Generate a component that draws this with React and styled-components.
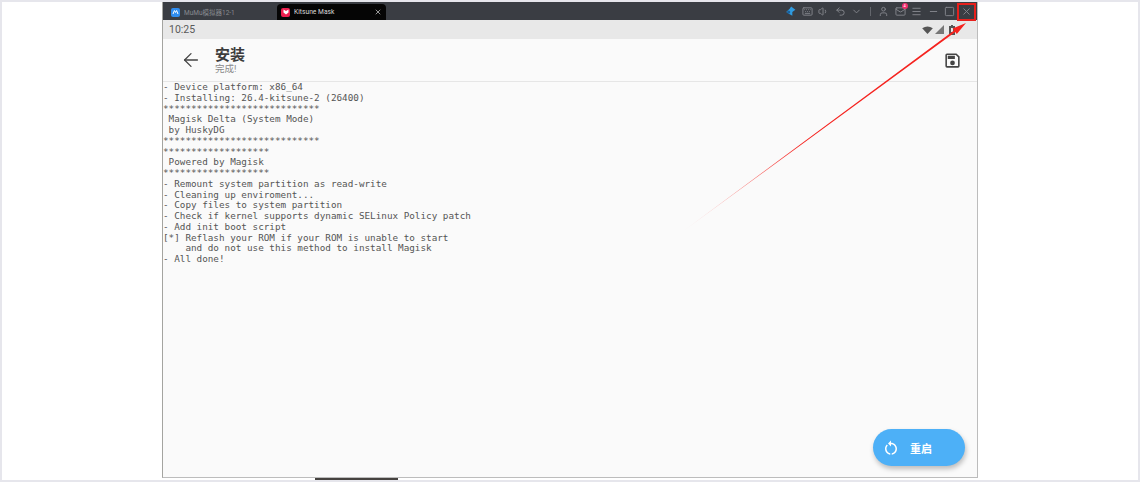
import React from "react";
import styled, { createGlobalStyle } from "styled-components";
import { ArrowLeft, Volume1, Undo2, ChevronDown, User, Mail, Menu, Minus, Square, X, Keyboard } from "lucide-react";

const GlobalStyle = createGlobalStyle`
	html, body {
		margin: 0;
		padding: 0;
		background: #fff;
	}
`;

const Page = styled.div`
	box-sizing: border-box;
	width: 1140px;
	height: 482px;
	border: 2px solid #e6e6ec;
	background: #fff;
	padding: 0 0 0 160px;
	overflow: hidden;
`;

const Emulator = styled.div`
	position: relative;
	box-sizing: border-box;
	width: 816px;
	height: 476px;
	border-left: 1px solid #a4a4a0;
	border-right: 1px solid #bcbcbc;
	border-bottom: 1px solid #bcbcbc;
	background: #fafafa;
	display: flex;
	flex-direction: column;
	font-family: "Roboto", "Noto Sans CJK SC", sans-serif;
`;

const DesktopStrip = styled.div`
	width: 83px;
	height: 2px;
	margin-left: 153px;
	background: #45423f;
`;

const TitleBar = styled.div`
	height: 18px;
	flex: none;
	background: #3a3d43;
	display: flex;
	align-items: flex-end;
	padding-left: 2px;
`;

const Tab = styled.div`
	display: flex;
	align-items: center;
	gap: 4px;
	height: 16px;
	box-sizing: border-box;
	width: ${(p) => p.$width}px;
	padding-left: ${(p) => (p.$active ? 4 : 6)}px;
	background: ${(p) => (p.$active ? "#050505" : "transparent")};
	border-radius: 4px 4px 0 0;
	color: ${(p) => (p.$active ? "#d8d8d8" : "#888b90")};
	font-size: ${(p) => (p.$active ? 6.7 : 6.5)}px;
	white-space: nowrap;
`;

const TabIcon = styled.span`
	width: 9px;
	height: 9px;
	flex: none;
	border-radius: 2px;
	background: ${(p) => p.$color};
	display: flex;
	align-items: center;
	justify-content: center;
`;

const TabClose = styled(X)`
	margin-left: auto;
	margin-right: 4px;
	color: #e0e0e0;
`;

const ToolGroup = styled.div`
	margin-left: auto;
	align-self: center;
	display: flex;
	align-items: center;
	gap: 5.5px;
	padding: 1px 5.5px 0 0;
	color: #85888e;
`;

const Divider = styled.span`
	width: 1px;
	height: 9px;
	margin: 0 2px;
	background: #63666c;
`;

const MailWrap = styled.span`
	position: relative;
	display: flex;
`;

const MailBadge = styled.span`
	position: absolute;
	top: -3px;
	right: -2px;
	width: 6px;
	height: 6px;
	border-radius: 50%;
	background: #ef2d6d;
	color: #fff;
	font-size: 4px;
	line-height: 6px;
	text-align: center;
`;

const StatusBar = styled.div`
	height: 19px;
	flex: none;
	background: #e8e8e8;
	display: flex;
	align-items: center;
	justify-content: space-between;
	padding: 0 22px 0 6px;
	color: #5a5a5a;
	font-size: 10.5px;
`;

const StatusIcons = styled.div`
	display: flex;
	align-items: center;
	gap: 2px;
`;

const BatteryIcon = styled.svg`
	margin-left: 3px;
`;

const AppBar = styled.div`
	height: 43px;
	flex: none;
	box-sizing: border-box;
	background: #fafafa;
	border-bottom: 1px solid #e6e6e6;
	display: flex;
	align-items: center;
	padding: 0 15.5px 0 17px;
	color: #444;
`;

const Titles = styled.div`
	margin-left: 13px;
	display: flex;
	flex-direction: column;
`;

const Title = styled.div`
	font-size: 15px;
	line-height: 17px;
	font-weight: 700;
	color: #3c3c3c;
`;

const Subtitle = styled.div`
	font-size: 9.5px;
	line-height: 9px;
	color: #8a8a8a;
`;

const SaveButton = styled.div`
	margin-left: auto;
	display: flex;
`;

const Console = styled.pre`
	margin: 0;
	padding: 0;
	font-family: "DejaVu Sans Mono", monospace;
	font-size: 9.31px;
	line-height: 10.75px;
	color: #555;
`;

const Fab = styled.div`
	position: absolute;
	right: 12px;
	bottom: 11px;
	width: 92px;
	height: 37px;
	box-sizing: border-box;
	padding-left: 9px;
	border-radius: 19px;
	background: #4db0f7;
	box-shadow: 1px 3px 5px rgba(0, 0, 0, 0.25);
	display: flex;
	align-items: center;
	gap: 10px;
	color: #fff;
	font-size: 11px;
	font-weight: 700;
`;

const Highlight = styled.div`
	position: absolute;
	top: 1px;
	right: 1px;
	width: 19px;
	height: 18px;
	box-sizing: border-box;
	border: 2px solid #e8201c;
`;

const Pointer = styled.svg`
	position: absolute;
	top: 0;
	left: 0;
	pointer-events: none;
`;

const log = `- Device platform: x86_64
- Installing: 26.4-kitsune-2 (26400)
****************************
 Magisk Delta (System Mode)
 by HuskyDG
****************************
*******************
 Powered by Magisk
*******************
- Remount system partition as read-write
- Cleaning up enviroment...
- Copy files to system partition
- Check if kernel supports dynamic SELinux Policy patch
- Add init boot script
[*] Reflash your ROM if your ROM is unable to start
    and do not use this method to install Magisk
- All done!`;

export default function App() {
	return (
		<Page>
			<GlobalStyle />
			<Emulator>
				<TitleBar>
					<Tab $width={112}>
						<TabIcon $color="#2f8df0">
							<svg width="7" height="6" viewBox="0 0 7 6">
								<path d="M1 5 L2.4 1.5 L3.5 3.5 L4.6 1.5 L6 5" fill="none" stroke="#fff" strokeWidth="1" />
							</svg>
						</TabIcon>
						MuMu模拟器12-1
					</Tab>
					<Tab $active $width={109}>
						<TabIcon $color="#ee1f4f">
							<svg width="6" height="6" viewBox="0 0 6 6">
								<path d="M0.5 0.5 L3 2 L5.5 0.5 V3.5 L3 5.5 L0.5 3.5 Z" fill="#fff" />
							</svg>
						</TabIcon>
						Kitsune Mask
						<TabClose size={8} strokeWidth={2} />
					</Tab>
					<ToolGroup>
						<svg width="11" height="11" viewBox="0 0 9 9">
							<path d="M1 5 L4 2 L5 0.5 L8.5 3 L6 5 L6 8 L3.5 6.5 Z" fill="#2f9be0" />
							<circle cx="3" cy="5" r="1.3" fill="#1b5f99" />
						</svg>
						<Keyboard size={11} strokeWidth={2} />
						<Volume1 size={11} strokeWidth={2} />
						<Undo2 size={11} strokeWidth={2} />
						<ChevronDown size={11} strokeWidth={2} />
						<Divider />
						<User size={11} strokeWidth={2} />
						<MailWrap>
							<Mail size={11} strokeWidth={2} />
							<MailBadge>4</MailBadge>
						</MailWrap>
						<Menu size={11} strokeWidth={2} />
						<Minus size={11} strokeWidth={2} />
						<Square size={11} strokeWidth={2} />
						<X size={11} strokeWidth={2} />
					</ToolGroup>
				</TitleBar>
				<StatusBar>
					10:25
					<StatusIcons>
						<svg width="11" height="8" viewBox="0 0 12 9">
							<path d="M0 2.5 Q6 -1.5 12 2.5 L6 9 Z" fill="#555" />
						</svg>
						<svg width="9" height="9" viewBox="0 0 9 9">
							<path d="M0 9 L9 0 V9 Z" fill="#777" />
						</svg>
						<BatteryIcon width="6" height="10" viewBox="0 0 6 10">
							<path d="M2 0 H4 V1 H6 V10 H0 V1 H2 Z" fill="#555" />
							<rect x="2" y="3" width="2" height="4" fill="#e8e8e8" />
						</BatteryIcon>
					</StatusIcons>
				</StatusBar>
				<AppBar>
					<ArrowLeft size={22} strokeWidth={1.4} />
					<Titles>
						<Title>安装</Title>
						<Subtitle>完成!</Subtitle>
					</Titles>
					<SaveButton>
						<svg width="19" height="19" viewBox="0 0 24 24" fill="currentColor">
							<path d="M17 3H5a2 2 0 0 0-2 2v14a2 2 0 0 0 2 2h14a2 2 0 0 0 2-2V7l-4-4zm2 16H5V5h11.17L19 7.83V19zm-7-7a3 3 0 1 0 0 6 3 3 0 0 0 0-6zM6 6h9v4H6z" />
						</svg>
					</SaveButton>
				</AppBar>
				<Console>{log}</Console>
				<Fab>
					<svg width="18" height="18" viewBox="0 0 24 24" fill="currentColor">
						<path d="M12 5V2L8 6l4 4V7c3.31 0 6 2.69 6 6 0 2.97-2.17 5.43-5 5.91v2.02c3.95-.49 7-3.85 7-7.93 0-4.42-3.58-8-8-8zm-6 8c0-1.65.67-3.15 1.76-4.24L6.34 7.34C4.9 8.79 4 10.79 4 13c0 4.08 3.05 7.44 7 7.93v-2.02c-2.83-.48-5-2.94-5-5.91z" />
					</svg>
					重启
				</Fab>
				<Highlight />
				<Pointer width="814" height="240" viewBox="0 0 814 240">
					<defs>
						<linearGradient id="pointerFill" gradientUnits="userSpaceOnUse" x1="519" y1="230" x2="640" y2="141">
							<stop offset="0" stopColor="#f5231f" stopOpacity="0.08" />
							<stop offset="1" stopColor="#f5231f" stopOpacity="1" />
						</linearGradient>
					</defs>
					<polygon points="519,230 791,28.5 789.6,26.5 803,21 793.8,32.1 792.3,30.1" fill="url(#pointerFill)" />
				</Pointer>
			</Emulator>
			<DesktopStrip />
		</Page>
	);
}
